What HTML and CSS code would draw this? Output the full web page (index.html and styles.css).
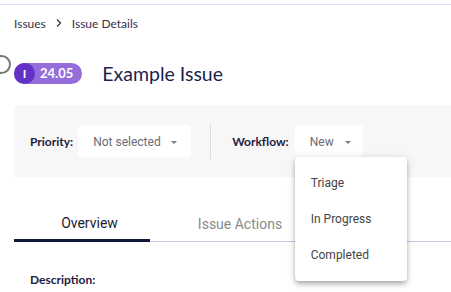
FILE: index.html
```html
<!DOCTYPE html>
<html>
<head>
<meta charset="utf-8">
<link rel="stylesheet" href="styles.css">
</head>
<body>
<div class="topbar"></div>
<div class="page">
  <nav class="crumbs">
    <span class="crumb">Issues</span>
    <svg class="chev" width="8" height="10" viewBox="0 0 8 10"><path d="M2 1.5 L5.5 5 L2 8.5" fill="none" stroke="#333" stroke-width="1.2"/></svg>
    <span class="crumb current">Issue Details</span>
  </nav>
  <div class="title-row">
    <span class="back"></span>
    <span class="badge"><span class="badge-i">I</span><span class="badge-num">24.05</span></span>
    <h1 class="title">Example Issue</h1>
  </div>
  <div class="panel">
    <span class="label">Priority:</span>
    <div class="select sel-priority"><span class="sel-text">Not selected</span><span class="caret"></span></div>
    <span class="divider"></span>
    <span class="label">Workflow:</span>
    <div class="select sel-workflow"><span class="sel-text">New</span><span class="caret"></span>
      <ul class="menu">
        <li>Triage</li>
        <li>In Progress</li>
        <li>Completed</li>
      </ul>
    </div>
  </div>
  <div class="tabs">
    <div class="tab active">Overview</div>
    <div class="tab">Issue Actions</div>
  </div>
  <div class="desc">Description:</div>
</div>
</body>
</html>
```

FILE: styles.css
```css
html, body { margin: 0; padding: 0; overflow: hidden; background: #fff; }
body { width: 451px; height: 292px; font-family: "Lato", "Noto Sans", sans-serif; }
.topbar { height: 4px; border-bottom: 1px solid #e2dff4; }
.page { padding: 0 0 0 14px; }
.crumbs { display: flex; align-items: center; height: 14px; margin-top: 11px; font-size: 12px; color: #33334a; }
.chev { margin: 0 9px 0 9px; }
.crumb.current { color: #3b2d4b; }
.title-row { display: flex; align-items: center; margin-top: 32px; height: 22px; position: relative; }
.back { position: absolute; left: -22px; top: -7px; width: 15px; height: 15px; border: 2px solid #777; border-radius: 50%; }
.badge { display: flex; align-items: center; height: 21px; border-radius: 11px; background: #946ddb; color: #fff; font-weight: 700; font-size: 13px; }
.badge-i { width: 21px; height: 21px; border-radius: 50%; background: #6431c6; display: flex; align-items: center; justify-content: center; font-size: 12px; }
.badge-num { padding: 0 9px 0 5px; }
.title { margin: 0 0 0 20px; font-size: 19.5px; font-weight: 400; color: #1c1f4c; }
.panel { display: flex; align-items: center; margin-top: 21px; margin-right: -12px; height: 72px; background: #f7f7f7; border-radius: 4px; padding-left: 16px; }
.label { font-size: 12px; font-weight: 700; color: #1e2140; }
.select { position: relative; display: flex; align-items: center; height: 32px; background: #fff; border-radius: 4px; font-family: "Roboto", sans-serif; font-size: 12px; color: #6a6a78; margin-left: 5px; box-sizing: border-box; padding-top: 2px; }
.sel-priority { width: 113px; padding-left: 15px; }
.sel-workflow { width: 68px; padding-left: 15px; margin-left: 6px; }
.caret { width: 0; height: 0; border-left: 3.5px solid transparent; border-right: 3.5px solid transparent; border-top: 3.5px solid #7a7a84; margin-left: 10px; }
.sel-workflow .caret { margin-left: 11px; }
.divider { width: 1px; height: 35px; background: #dcdcdc; margin: 0 20px 0 19px; }
.divider + .label { margin-left: 1px; }
.menu { position: absolute; left: 0; top: 32px; width: 112px; margin: 0; padding: 8px 0; list-style: none; background: #fff; border-radius: 4px; box-shadow: 0 2px 4px -1px rgba(0,0,0,.2), 0 4px 5px 0 rgba(0,0,0,.14), 0 1px 10px 0 rgba(0,0,0,.12); z-index: 2; }
.menu li { height: 36px; line-height: 36px; padding-left: 16px; font-size: 12px; color: #444; }
.tabs { display: flex; margin-top: 29px; border-bottom: 1px solid #c8c3e6; height: 35px; }
.tab { font-family: "Roboto", sans-serif; font-size: 14px; color: #8a8a8a; display: flex; align-items: center; justify-content: center; box-sizing: border-box; }
.tab.active { width: 136px; padding-left: 15px; color: #1a1d33; border-bottom: 3px solid #11193a; margin-bottom: -1px; }
.tab:not(.active) { width: 180px; }
.desc { margin-top: 30px; font-size: 12px; font-weight: 700; color: #1e2140; padding-left: 16px; }
```
